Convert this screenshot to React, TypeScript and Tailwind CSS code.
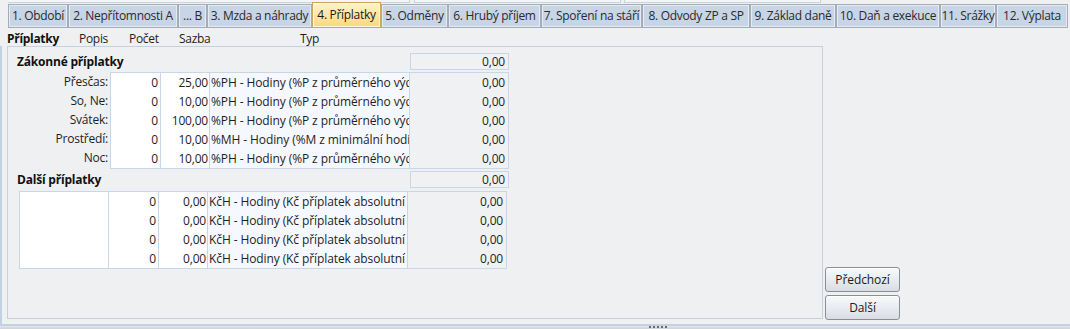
import React from "react";

const tabs: { label: string; w: number; active?: boolean }[] = [
  { label: "1. Období", w: 60 },
  { label: "2. Nepřítomnosti A", w: 110 },
  { label: "... B", w: 29 },
  { label: "3. Mzda a náhrady", w: 105 },
  { label: "4. Příplatky", w: 69, active: true },
  { label: "5. Odměny", w: 67 },
  { label: "6. Hrubý příjem", w: 93 },
  { label: "7. Spoření na stáří", w: 101 },
  { label: "8. Odvody ZP a SP", w: 108 },
  { label: "9. Základ daně", w: 86 },
  { label: "10. Daň a exekuce", w: 104 },
  { label: "11. Srážky", w: 56 },
  { label: "12. Výplata", w: 72 },
];

const zak = [
  { l: "Přesčas:", s: "25,00", t: "%PH - Hodiny (%P z průměrného výdělku)" },
  { l: "So, Ne:", s: "10,00", t: "%PH - Hodiny (%P z průměrného výdělku)" },
  { l: "Svátek:", s: "100,00", t: "%PH - Hodiny (%P z průměrného výdělku)" },
  { l: "Prostředí:", s: "10,00", t: "%MH - Hodiny (%M z minimální hodinové mzdy)" },
  { l: "Noc:", s: "10,00", t: "%PH - Hodiny (%P z průměrného výdělku)" },
];

function Cells({ s, t }: { s: string; t: string }) {
  return (
    <>
      <div className="w-[50px] h-[19px] bg-white border-r border-[#c8d7e7] flex items-center justify-end pr-[2px]">0</div>
      <div className="w-[49px] h-[19px] bg-white border-r border-[#c8d7e7] flex items-center justify-end pr-[1px]">{s}</div>
      <div className="w-[200px] h-[19px] bg-[#f5f9ff] border-r border-[#c8d7e7] flex items-center overflow-hidden whitespace-nowrap pl-[1px] tracking-[-0.1px]">{t}</div>
      <div className="w-[98px] h-[19px] bg-[#f0f1f3] flex items-center justify-end pr-[3px]">0,00</div>
    </>
  );
}

function Btn({ children }: { children: React.ReactNode }) {
  return (
    <div className="w-[75px] h-[25px] rounded-[3px] border border-[#8a8f96] bg-gradient-to-b from-[#f8f9fa] via-[#e9ecf0] to-[#d9dde3] flex items-center justify-center text-[#1a1a1a] shadow-[inset_0_1px_0_#ffffff]">
      {children}
    </div>
  );
}

export default function App() {
  return (
    <div
      className="w-[1070px] h-[329px] bg-[#eff0f2] text-[12px] text-[#1e1e1e] relative overflow-hidden"
      style={{ fontFamily: '"Open Sans", "Noto Sans", sans-serif' }}
    >
      {/* top remnant strip */}
      <div className="h-[3px] flex">
        <div className="w-[8px]" />
        <div className="w-[402px] border-b border-r border-[#c8d3df] bg-[#f4f5f7]" />
        <div className="w-[4px]" />
        <div className="w-[207px] border-b border-x border-[#c8d3df] bg-[#f4f5f7]" />
        <div className="w-[3px]" />
        <div className="w-[197px] border-b border-l border-r border-[#c8d3df] bg-[#f4f5f7]" />
      </div>
      {/* tabs */}
      <div className="flex items-end pl-[8px] h-[25px] tracking-[-0.3px]">
        {tabs.map((t) => (
          <div
            key={t.label}
            style={{ width: t.w }}
            className={
              t.active
                ? "h-[26px] border border-[#c9a85b] bg-gradient-to-b from-[#fff3c9] to-[#ffd77c] flex items-center justify-center whitespace-nowrap text-[#1a1a1a] shadow-[inset_0_0_0_1px_#fff8e0]"
                : "h-[24px] border border-[#a5acb5] bg-[#c7d5e6] flex items-center justify-center whitespace-nowrap text-[#2a2a2a] shadow-[inset_0_0_0_1px_#e3ebf4]"
            }
          >
            {t.label}
          </div>
        ))}
      </div>
      {/* header row */}
      <div className="h-[18px] mt-[2px] flex items-center pl-[7px] text-[#2b1a1a] tracking-[-0.3px]">
        <div className="w-[72px] font-bold text-[#111]">Příplatky</div>
        <div className="w-[50px]">Popis</div>
        <div className="w-[50px]">Počet</div>
        <div className="w-[121px]">Sazba</div>
        <div>Typ</div>
      </div>
      {/* main area */}
      <div className="absolute left-0 top-[46px] w-[1070px] h-[283px] flex flex-col">
        <div className="flex h-[279px] border-l-[2px] border-b border-[#c3d2e2] pl-[5px]">
          <div className="w-[816px] h-[273px] border border-[#c3d2e2] flex flex-col pt-[6px] pl-[9px] tracking-[-0.2px]">
            {/* Zákonné */}
            <div className="flex h-[17px] items-center">
              <div className="w-[393px] font-bold text-[#111]">Zákonné příplatky</div>
              <div className="w-[99px] h-[17px] border border-[#c8d7e7] bg-[#f0f1f3] flex items-center justify-end pr-[3px]">0,00</div>
            </div>
            <div className="flex mt-[2px]">
              <div className="w-[93px] flex flex-col">
                {zak.map((r) => (
                  <div key={r.l} className="h-[19px] flex items-center justify-end pr-[2px]">{r.l}</div>
                ))}
              </div>
              <div className="border border-[#c8d7e7] flex flex-col">
                {zak.map((r, i) => (
                  <div key={i} className="flex">
                    <Cells s={r.s} t={r.t} />
                  </div>
                ))}
              </div>
            </div>
            {/* Další */}
            <div className="flex h-[17px] items-center mt-[2px]">
              <div className="w-[393px] font-bold text-[#111]">Další příplatky</div>
              <div className="w-[99px] h-[17px] border border-[#c8d7e7] bg-[#f0f1f3] flex items-center justify-end pr-[3px]">0,00</div>
            </div>
            <div className="flex mt-[3px] ml-[2px]">
              <div className="border border-[#c8d7e7] flex">
                <div className="w-[89px] bg-white border-r border-[#c8d7e7]" />
                <div className="flex flex-col">
                  {[0, 1, 2, 3].map((i) => (
                    <div key={i} className="flex">
                      <Cells s="0,00" t="KčH - Hodiny (Kč příplatek absolutní částkou)" />
                    </div>
                  ))}
                </div>
              </div>
            </div>
          </div>
          <div className="flex flex-col justify-end gap-[3px] pl-[2px] pb-[4px] tracking-[-0.1px]">
            <Btn>Předchozí</Btn>
            <Btn>Další</Btn>
          </div>
        </div>
        <div className="h-[4px] border-t border-[#c3d2e2] bg-gradient-to-b from-[#e4e6e9] to-[#cfd2d6] relative">
          <div className="absolute left-[649px] top-0 flex gap-[2px]">
            {[0, 1, 2, 3, 4].map((i) => (
              <div key={i} className="w-[2px] h-[2px] bg-[#6b6b6b]" />
            ))}
          </div>
        </div>
      </div>
    </div>
  );
}
